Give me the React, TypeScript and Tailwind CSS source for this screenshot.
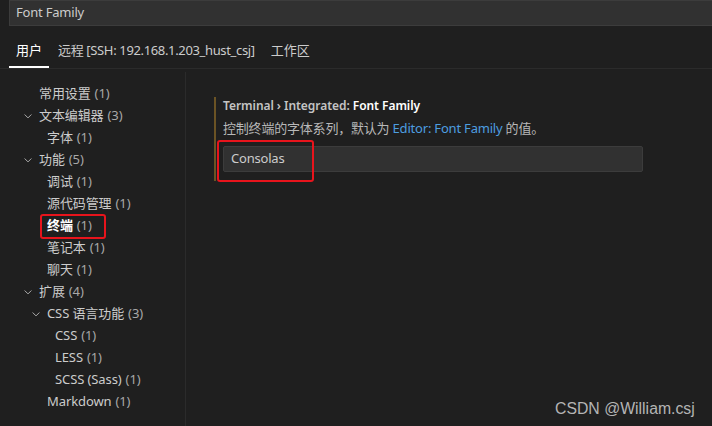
import React from "react";

const font = { fontFamily: '"Noto Sans", "Noto Sans CJK SC", sans-serif' };

type Item = { label: string; count: string; level: number; chevron?: boolean; bold?: boolean; boxed?: boolean };

const items: Item[] = [
  { label: "常用设置", count: "(1)", level: 1 },
  { label: "文本编辑器", count: "(3)", level: 1, chevron: true },
  { label: "字体", count: "(1)", level: 2 },
  { label: "功能", count: "(5)", level: 1, chevron: true },
  { label: "调试", count: "(1)", level: 2 },
  { label: "源代码管理", count: "(1)", level: 2 },
  { label: "终端", count: "(1)", level: 2, bold: true, boxed: true },
  { label: "笔记本", count: "(1)", level: 2 },
  { label: "聊天", count: "(1)", level: 2 },
  { label: "扩展", count: "(4)", level: 1, chevron: true },
  { label: "CSS 语言功能", count: "(3)", level: 2, chevron: true },
  { label: "CSS", count: "(1)", level: 3 },
  { label: "LESS", count: "(1)", level: 3 },
  { label: "SCSS (Sass)", count: "(1)", level: 3 },
  { label: "Markdown", count: "(1)", level: 2 },
];

const Chevron = () => (
  <svg width="12" height="12" viewBox="0 0 16 16" className="shrink-0">
    <path d="M3.5 6l4.5 4.5L12.5 6" fill="none" stroke="#b0b0b0" strokeWidth="1.3" />
  </svg>
);

export default function App() {
  return (
    <div className="w-[712px] h-[426px] bg-[#1f1f1f] overflow-hidden relative text-[#cccccc]" style={font}>
      <div className="pl-[9px] h-[26px]">
        <div className="h-[26px] bg-[#313131] border-y border-l border-[#3c3c3c] flex items-center pl-[6px] text-[13px] tracking-[-0.2px] text-[#cccccc]">
          Font Family
        </div>
      </div>
      <div className="mt-[14px] pl-[9px] border-b border-[#2b2b2b] h-[29px] flex items-start text-[13px]">
        <div className="px-[7px] h-[28px] flex items-start pt-[1px] border-b-2 border-white text-white">用户</div>
        <div className="pl-[9px] pr-[7px] pt-[1px] tracking-[-0.35px] text-[#cccccc]">远程 [SSH: 192.168.1.203_hust_csj]</div>
        <div className="px-[7px] pt-[1px] ml-[2px] text-[#cccccc]">工作区</div>
      </div>
      <div className="flex">
        <div className="w-[185px] pt-[14px] text-[13px]">
          {items.map((it, i) => {
            const textX = it.level === 1 ? 39 : it.level === 2 ? 47 : 55;
            return (
              <div key={i} className="h-[22px] flex items-center relative tracking-[-0.1px]" style={{ paddingLeft: textX }}>
                {it.chevron && (
                  <span className="absolute top-[5px]" style={{ left: textX - 17 }}>
                    <Chevron />
                  </span>
                )}
                <span className={it.bold ? "font-bold text-white" : "text-[#cccccc]"}>{it.label}</span>
                <span className="ml-[4px] text-[#a8a8a8]">{it.count}</span>
                {it.boxed && (
                  <span className="absolute left-[40px] top-[-1px] w-[66px] h-[25px] border-2 border-[#e8141c] rounded-[3px]" />
                )}
              </div>
            );
          })}
        </div>
        <div className="w-px bg-[#2b2b2b] mt-[3px] h-[360px]" />
        <div className="flex-1 pl-[28px] pt-[28px]">
          <div className="border-l-2 border-[#6b5324] pl-[7px] pb-[9px] w-[430px]">
            <div className="text-[12px] font-semibold leading-[18px] tracking-[-0.05px] text-[#c4c4c4]">
              Terminal › Integrated: <span className="text-white">Font Family</span>
            </div>
            <div className="text-[13px] leading-[18px] mt-[4px] tracking-[-0.2px] text-[#b8b8b8]">
              控制终端的字体系列，默认为 <span className="text-[#4d9ee0]">Editor: Font Family</span> 的值。
            </div>
            <div className="relative mt-[9px] w-[420px] h-[26px] bg-[#313131] border border-[#3c3c3c] rounded-[2px] flex items-center pl-[7px] text-[13px] tracking-[-0.2px] text-[#cccccc]">
              Consolas
              <span className="absolute left-[-7px] top-[-7px] w-[97px] h-[42px] border-2 border-[#e8141c] rounded-[3px]" />
            </div>
          </div>
        </div>
      </div>
      <div className="absolute left-[555px] top-[397px] text-[15.8px] text-[#b4b4b4]" style={{ fontFamily: '"Liberation Sans", Arial, sans-serif' }}>
        CSDN @William.csj
      </div>
    </div>
  );
}
